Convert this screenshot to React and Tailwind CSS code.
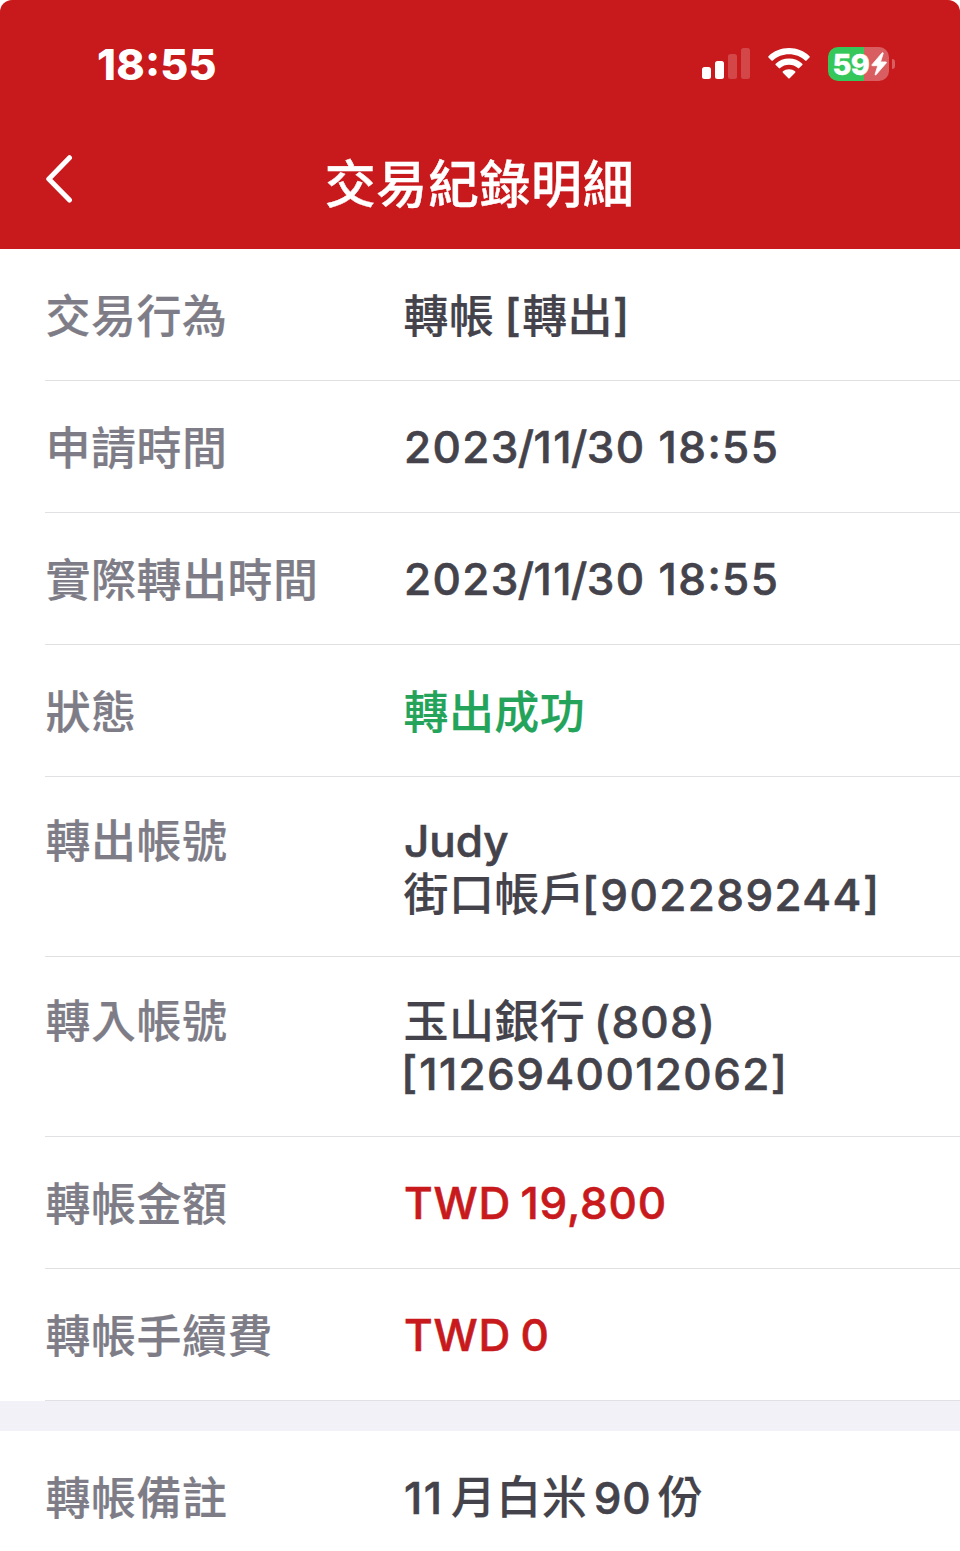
const rows = [
  { label: '交易行為', lines: ['轉帳 [轉出]'] },
  { label: '申請時間', lines: ['2023/11/30 18:55'] },
  { label: '實際轉出時間', lines: ['2023/11/30 18:55'] },
  { label: '狀態', lines: ['轉出成功'], color: 'text-[#24a35a]' },
  { label: '轉出帳號', lines: ['Judy', '街口帳戶[902289244]'] },
  { label: '轉入帳號', lines: ['玉山銀行 (808)', '[1126940012062]'] },
  { label: '轉帳金額', lines: ['TWD 19,800'], color: 'text-[#c8191d]' },
  { label: '轉帳手續費', lines: ['TWD 0'], color: 'text-[#c8191d]' },
];

const note = { label: '轉帳備註', lines: ['11月白米 90 份'] };

// Chinese, slashes and raised punctuation each need their own spacing
function runClass(run) {
  if (/[\u4e00-\u9fff]/.test(run)) {
    return 'ml-[-0.5px] text-[45px] tracking-[0.4px] [-webkit-text-stroke:0.2px_currentColor]';
  }
  if (run === '/') return 'ml-[-2px] mr-[-0.5px] tracking-normal';
  if (run === '[') return "ml-[-3px] mr-[2px] tracking-normal [font-feature-settings:'case']";
  if (run === ']') return "tracking-normal [font-feature-settings:'case']";
  if (run === ':') return "tracking-[1.3px] [font-feature-settings:'case']";
  if (run === 'Judy') return 'tracking-normal';
  if (/^[A-Z]/.test(run)) return 'tracking-[0.8px] [word-spacing:-3px]';
  if (/^ \(/.test(run)) return 'tracking-[1.2px] [word-spacing:-4px]';
  if (/^ \d/.test(run)) return 'tracking-[0.9px] [word-spacing:-6px]';
  return 'tracking-[1.4px]';
}

function Line({ text }) {
  const runs = text.match(/[\u4e00-\u9fff]+|[/:[\]]|[^\u4e00-\u9fff/:[\]]+/g);
  return (
    <div className="h-[53px] whitespace-pre">
      {runs.map((run, i) => (
        <span key={i} className={runClass(run)}>
          {run}
          {/^\d+$/.test(run) && /[\u4e00-\u9fff]/.test(runs[i + 1]) && (
            <span className="inline-block w-[8px]" />
          )}
        </span>
      ))}
    </div>
  );
}

function valuePadding(lines) {
  if (lines.length > 1) return 'pt-[38px]';
  return /^[\u4e00-\u9fff]/.test(lines[0]) ? 'pt-[41px]' : 'pt-[40px]';
}

function Row({ label, lines, color = 'text-[#44434b]', last }) {
  const tall = lines.length > 1;
  return (
    <div
      className={`flex items-start ${tall ? 'h-[180px]' : 'h-[132px]'} ${
        last ? '' : 'border-b border-[#e1e1e3]'
      }`}
    >
      <div
        className={`w-[359px] shrink-0 pl-[0.5px] text-[45px] font-medium leading-[53px] tracking-[0.5px] text-[#7e7d87] [-webkit-text-stroke:0.2px_currentColor] ${
          tall ? 'pt-[38px]' : 'pt-[41px]'
        }`}
      >
        {label}
      </div>
      <div
        className={`text-[44px] font-medium leading-[53px] [-webkit-text-stroke:0.6px_currentColor] ${color} ${valuePadding(lines)}`}
      >
        {lines.map((line) => (
          <Line key={line} text={line} />
        ))}
      </div>
    </div>
  );
}

function Signal() {
  return (
    <div className="flex h-[31px] items-end gap-[4px] pb-px">
      <span className="h-[12px] w-[9px] rounded-[2.5px] bg-white" />
      <span className="h-[18px] w-[9px] rounded-[2.5px] bg-white" />
      <span className="h-[25px] w-[9px] rounded-[2.5px] bg-white/20" />
      <span className="h-[31px] w-[9px] rounded-[2.5px] bg-white/20" />
    </div>
  );
}

function Wifi() {
  return (
    <svg className="mb-px" width="42" height="31" viewBox="0 0 42 31" fill="#fff">
      <path d="M21 0C13 0 5.800 3 .5 8.200Q-.1 8.900 .5 9.600L3.500 12.500Q4.200 13.100 4.900 12.500C9.200 8.400 14.900 6.200 21 6.200S32.800 8.400 37.100 12.500Q37.800 13.100 38.500 12.500L41.500 9.600Q42.100 8.900 41.500 8.200C36.200 3 29 0 21 0Z" />
      <path d="M21 10.600C15.900 10.600 11.200 12.500 7.700 15.700Q7 16.400 7.700 17.100L10.800 20.100Q11.400 20.700 12.100 20.100C14.500 18 17.600 16.800 21 16.800S27.500 18 29.900 20.100Q30.600 20.700 31.200 20.100L34.300 17.100Q35 16.400 34.300 15.700C30.800 12.500 26.100 10.600 21 10.600Z" />
      <path d="M21 21.200C18.600 21.200 16.500 22 14.900 23.300Q14.200 24 14.900 24.700L20.300 30.200Q21 30.900 21.700 30.200L27.100 24.700Q27.800 24 27.100 23.300C25.500 22 23.400 21.200 21 21.200Z" />
    </svg>
  );
}

function Battery() {
  return (
    <div className="flex items-center gap-[3px]">
      <div className="flex h-[34px] w-[61px] items-center rounded-[10px] bg-linear-to-r from-[#35c759] from-59% to-[#d95e61] to-59% pl-[4.5px]">
        <span className="w-[38px] text-[29px] font-extrabold leading-none tracking-[-0.7px] [-webkit-text-stroke:0.4px_white]">
          59
        </span>
        <svg width="16" height="24" viewBox="0 0 16 24" fill="#fff" stroke="#fff" strokeWidth="0.8">
          <path d="M11.200 .8L1 12.700Q.4 13.700 1.500 13.700H6.800L4.100 22.200Q4 23.500 5 22.800L15.300 10.900Q15.900 9.900 14.800 9.900H9.500L12.200 1.500Q12.200 .2 11.200 .8Z" />
        </svg>
      </div>
      <span className="h-[10px] w-[3px] rounded-r-full bg-white/30" />
    </div>
  );
}

export default function App() {
  return (
    <div className="h-[1551px] w-[960px] overflow-hidden bg-white font-['Inter','Noto_Sans_CJK_TC',sans-serif]">
      <header className="h-[249px] rounded-t-[12px] bg-[#c8191c] text-white">
        <div className="flex h-[128px] items-center justify-between pl-[97px] pr-[65px]">
          <div className="text-[43px] font-extrabold tracking-[0.2px]">
            18<span className="[font-feature-settings:'case']">:</span>55
          </div>
          <div className="flex h-[34px] items-center gap-[18px]">
            <Signal />
            <Wifi />
            <Battery />
          </div>
        </div>
        <div className="flex h-[101px] items-center justify-between px-[45px]">
          <svg
            width="28"
            height="50"
            viewBox="0 0 28 50"
            fill="none"
            stroke="#fff"
            strokeWidth="5"
            strokeLinecap="round"
            strokeLinejoin="round"
          >
            <path d="M24.500 3.700L3.800 25L24.500 46" />
          </svg>
          <h1 className="pr-px pt-[11px] text-[51px] font-medium leading-none tracking-[0.6px] [-webkit-text-stroke:0.4px_white]">
            交易紀錄明細
          </h1>
          <div className="w-[28px]" />
        </div>
      </header>

      <div className="pl-[45px]">
        {rows.map((row) => (
          <Row key={row.label} {...row} />
        ))}
      </div>
      <div className="h-[30px] bg-[#f2f1f7]" />
      <div className="pl-[45px]">
        <Row {...note} last />
      </div>
    </div>
  );
}
